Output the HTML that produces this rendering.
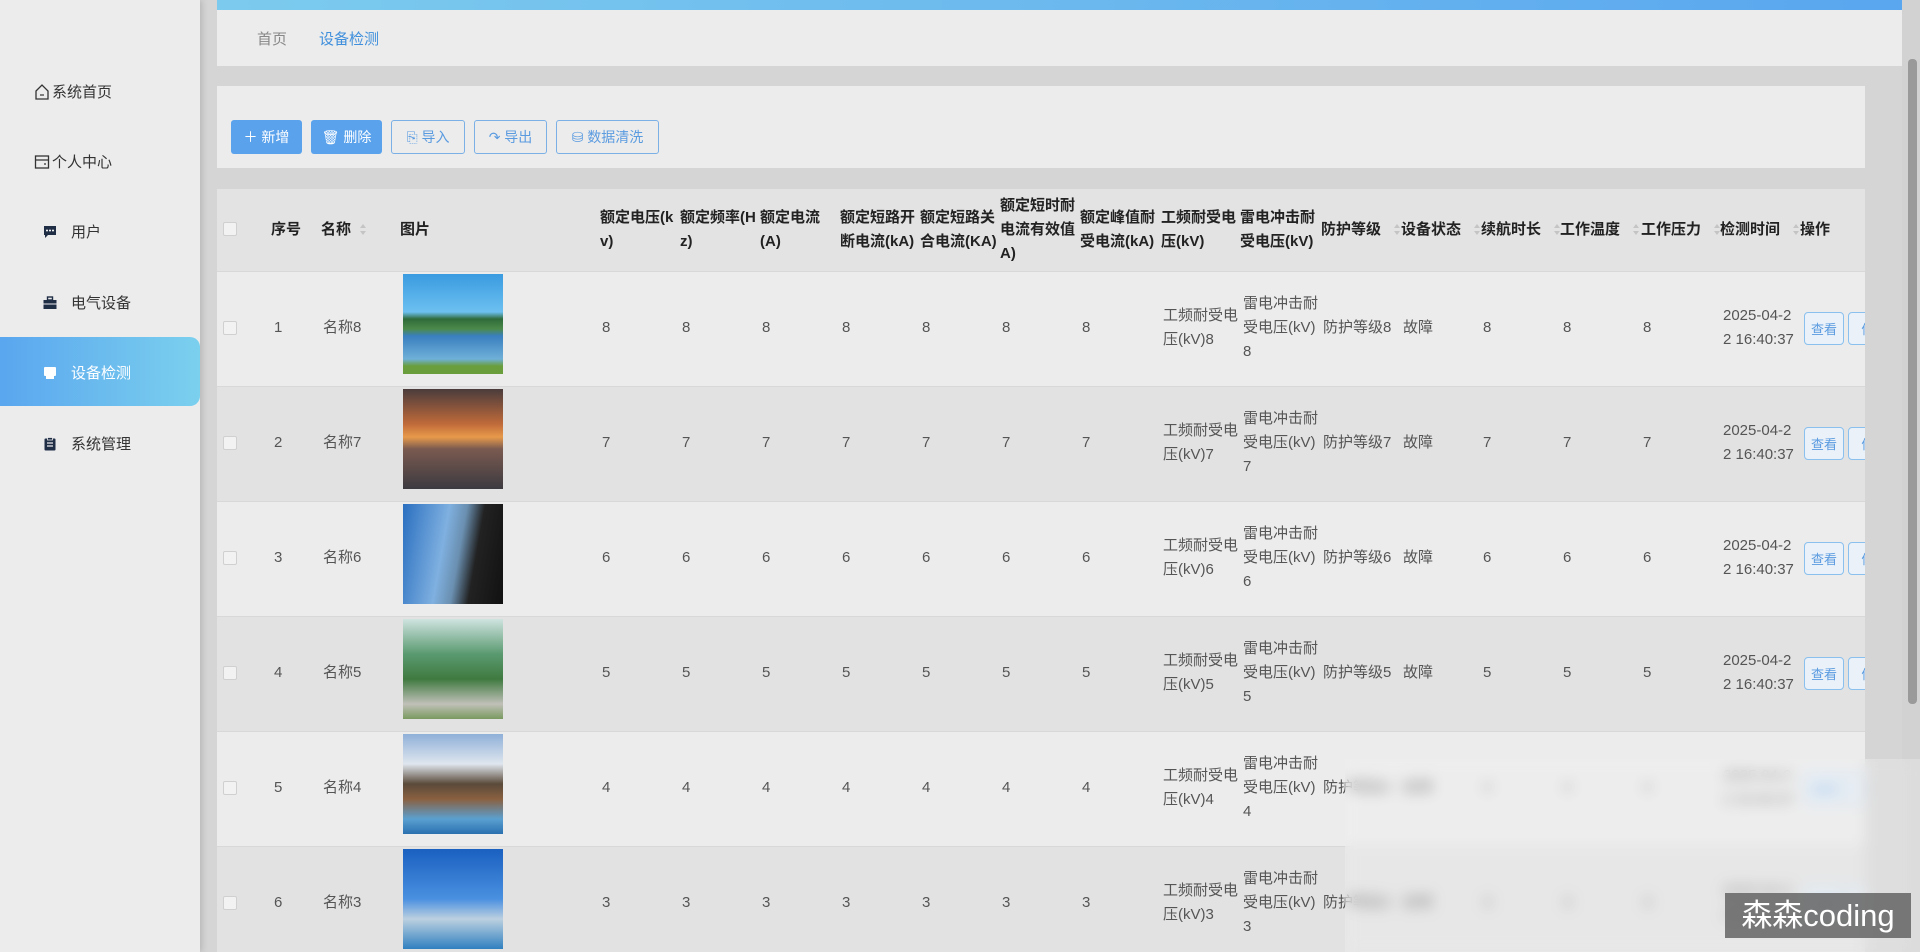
<!DOCTYPE html>
<html><head><meta charset="utf-8">
<style>
*{box-sizing:border-box;margin:0;padding:0}
body{width:1920px;height:952px;overflow:hidden;background:#d5d5d5;font-family:"Liberation Sans","Noto Sans CJK SC",sans-serif;color:#444;position:relative}
.abs{position:absolute}
#side{left:0;top:0;width:200px;height:952px;background:#ececed;box-shadow:2px 0 6px rgba(0,0,0,.15);z-index:2}
.mi{position:absolute;font-size:15px;color:#333;display:flex;align-items:center}
.act{left:0;top:337px;width:200px;height:69px;border-radius:0 10px 10px 0;background:linear-gradient(90deg,#5aa6ef,#7bd0ee)}
#topbar{left:217px;top:0;width:1688px;height:10px;background:linear-gradient(90deg,#7ccbee,#5aa6ef)}
#crumb{left:217px;top:10px;width:1688px;height:56px;background:#ececec}
#tool{left:217px;top:86px;width:1648px;height:82px;background:#ececec}
.btn{position:absolute;top:120px;height:34px;font-size:14px;border-radius:3px;display:flex;align-items:center;justify-content:center}
.bp{background:#5aa2ec;color:#fff}
.bo{border:1px solid #7ab0e6;color:#5a9be0;background:#ececec}
#card{left:217px;top:189px;width:1648px;height:763px;background:#ececec;overflow:hidden}
.hd{position:absolute;left:0;top:0;width:1648px;height:82px;background:#e3e3e3}
.row{position:absolute;left:0;width:1648px;height:115px;border-top:1px solid #d8d8d8}
.t{position:absolute;font-size:15px;line-height:24px;white-space:nowrap;color:#555}
.h{position:absolute;font-size:15px;line-height:24px;white-space:nowrap;color:#222;font-weight:bold}
.cb{position:absolute;width:14px;height:14px;border:1px solid #d0d0d0;background:#f2f2f2;border-radius:2px}
.sort{position:absolute;width:6px;height:12px}
.sort:before{content:"";position:absolute;left:0;top:0;border:3px solid transparent;border-bottom:4px solid #c4c4c4;border-top:0}
.sort:after{content:"";position:absolute;left:0;top:7px;border:3px solid transparent;border-top:4px solid #c4c4c4;border-bottom:0}
.ob{position:absolute;width:40px;height:33px;border:1px solid #8ac0ee;border-radius:4px;color:#5a9be0;font-size:13px;display:flex;align-items:center;justify-content:center;background:#eaf1f8}
#scroll{left:1902px;top:0;width:18px;height:952px;background:#d2d2d2}
#thumb{left:1908px;top:59px;width:9px;height:645px;background:#9a9a9a;border-radius:4px}
#blur{left:1345px;top:759px;width:575px;height:193px;backdrop-filter:blur(7px);-webkit-backdrop-filter:blur(7px);background:rgba(240,240,240,.35);z-index:5}
#wm{left:1725px;top:893px;width:186px;height:45px;background:rgba(100,100,100,.85);color:#fff;font-size:31px;line-height:45px;text-align:center;z-index:6}
</style></head><body>
<div id="side" class="abs">
  <div class="mi" style="left:34px;top:81px"><svg width="16" height="18" viewBox="0 0 16 18"><path d="M2 8 L8 2 L14 8 V16 H2 Z" fill="none" stroke="#333" stroke-width="1.3"/><path d="M6 12 h4" stroke="#333" stroke-width="1.2"/></svg><span style="margin-left:2px">系统首页</span></div>
  <div class="mi" style="left:34px;top:151px"><svg width="16" height="18" viewBox="0 0 16 18"><rect x="1.5" y="3" width="13" height="12" fill="none" stroke="#333" stroke-width="1.3"/><path d="M1.5 7 h13 M10 11h2" stroke="#333" stroke-width="1.2"/></svg><span style="margin-left:2px">个人中心</span></div>
  <div class="mi" style="left:43px;top:221px"><svg width="14" height="14" viewBox="0 0 14 14"><path d="M1 1 h12 v9 h-8 l-3 3 v-3 h-1z" fill="#1f2d45"/><circle cx="4" cy="5.5" r="1" fill="#fff"/><circle cx="7" cy="5.5" r="1" fill="#fff"/><circle cx="10" cy="5.5" r="1" fill="#fff"/></svg><span style="margin-left:14px">用户</span></div>
  <div class="mi" style="left:43px;top:292px"><svg width="14" height="14" viewBox="0 0 14 14"><rect x="4.5" y="1" width="5" height="3" fill="none" stroke="#1f2d45" stroke-width="1.4"/><rect x="0.5" y="4" width="13" height="9" fill="#1f2d45"/><path d="M0.5 8h13" stroke="#ececed"/></svg><span style="margin-left:14px">电气设备</span></div>
  <div class="abs act"></div>
  <div class="mi" style="left:43px;top:362px;color:#fff"><svg width="14" height="14" viewBox="0 0 14 14"><rect x="1" y="1" width="12" height="9" rx="1" fill="#fff"/><rect x="3" y="10" width="8" height="3" fill="#fff"/></svg><span style="margin-left:14px">设备检测</span></div>
  <div class="mi" style="left:43px;top:433px"><svg width="14" height="14" viewBox="0 0 14 14"><rect x="1.5" y="1.5" width="11" height="12" rx="1" fill="#1f2d45"/><rect x="4.5" y="0.5" width="5" height="2.5" fill="#1f2d45" stroke="#ececed" stroke-width=".8"/><path d="M4 6h6M4 9h6" stroke="#ececed" stroke-width="1.2"/></svg><span style="margin-left:14px">系统管理</span></div>
</div>
<div id="topbar" class="abs"></div>
<div id="crumb" class="abs"><span class="t" style="left:40px;top:18px;color:#888">首页</span><span class="t" style="left:102px;top:18px;color:#3f8fdc">设备检测</span></div>
<div id="tool" class="abs"></div>
<div class="btn bp" style="left:231px;width:71px">＋ 新增</div>
<div class="btn bp" style="left:311px;width:71px">🗑 删除</div>
<div class="btn bo" style="left:391px;width:74px">⎘ 导入</div>
<div class="btn bo" style="left:474px;width:73px">↷ 导出</div>
<div class="btn bo" style="left:556px;width:103px">⛁ 数据清洗</div>
<div id="card" class="abs"></div>
<div id="scroll" class="abs"></div><div id="thumb" class="abs"></div>
<div id="blur" class="abs"></div>
<div id="wm" class="abs">森森coding</div>
<script>
var c=document.getElementById('card');
var L=217,T=189;
function el(cls,x,y,html,st){var d=document.createElement('div');d.className=cls;d.style.left=(x-L)+'px';d.style.top=(y-T)+'px';if(html!=null)d.innerHTML=html;if(st)d.style.cssText+=st;c.appendChild(d);return d;}
var h=document.createElement('div');h.className='hd';c.appendChild(h);
var imgs=['linear-gradient(180deg,#3a9be0 0%,#6cc0f0 38%,#2f6b3a 45%,#4b8a4a 55%,#3a7fbf 62%,#6fb0d8 85%,#6a9e3c 92%)',
'linear-gradient(180deg,#4a3c3c 0%,#c06a3a 35%,#e89a4a 48%,#7a5a50 60%,#3c3a40 100%)',
'linear-gradient(100deg,#2a6fc0 0%,#7fb0e0 40%,#6a8fb0 55%,#222 70%,#111 100%)',
'linear-gradient(180deg,#cfe3e0 0%,#5a9a70 35%,#3f7a40 60%,#c0c0b8 85%,#7a9a60 100%)',
'linear-gradient(180deg,#8fb0d8 0%,#dfe6ee 30%,#5a4a3a 50%,#8a6040 65%,#5aa0d0 85%,#2a70b0 100%)',
'linear-gradient(180deg,#1a60c0 0%,#4a90e0 50%,#bcd0e0 70%,#3080c0 100%)'];
el('cb',223,222);
el('h',271,218,'序号');el('h',321,218,'名称');el('sort',360,224);el('h',400,218,'图片');
var hs=[[600,['额定电压(k','v)']],[680,['额定频率(H','z)']],[760,['额定电流','(A)']],[840,['额定短路开','断电流(kA)']],[920,['额定短路关','合电流(KA)']],[1000,['额定短时耐','电流有效值','A)']],[1080,['额定峰值耐','受电流(kA)']],[1161,['工频耐受电','压(kV)']],[1240,['雷电冲击耐','受电压(kV)']]];
hs.forEach(function(a){var n=a[1].length;var d=el('h',a[0],230-n*12,a[1].join('<br>'));d.style.width='80px';d.style.overflow='hidden';});
[[1321,'防护等级'],[1401,'设备状态'],[1481,'续航时长'],[1560,'工作温度'],[1641,'工作压力'],[1720,'检测时间'],[1800,'操作']].forEach(function(a,i){el('h',a[0],218,a[1]);if(i<6)el('sort',a[0]+73,224);});
for(var i=0;i<6;i++){
 var y=271+i*115,cy=y+57;
 var r=document.createElement('div');r.className='row';r.style.top=(y-T)+'px';r.style.background=i%2?'#e2e2e2':'#ececec';c.appendChild(r);
 var n=[8,7,6,5,4,3][i];
 el('cb',223,cy-7);
 el('t',274,cy-12,''+(i+1));el('t',323,cy-12,'名称'+n);
 el('',403,y+3,'', 'position:absolute;width:100px;height:100px;background:'+imgs[i]);
 [602,682,762,842,922,1002,1082].forEach(function(x){el('t',x,cy-12,''+n)});
 el('t',1163,cy-24,'工频耐受电<br>压(kV)'+n);
 el('t',1243,cy-36,'雷电冲击耐<br>受电压(kV)<br>'+n);
 el('t',1323,cy-12,'防护等级'+n);el('t',1403,cy-12,'故障');
 [1483,1563,1643].forEach(function(x){el('t',x,cy-12,''+n)});
 el('t',1723,cy-24,'2025-04-2<br>2 16:40:37');
 el('ob',1804,cy-16,'查看');el('ob',1848,cy-16,'修');
}
</script>
</body></html>
